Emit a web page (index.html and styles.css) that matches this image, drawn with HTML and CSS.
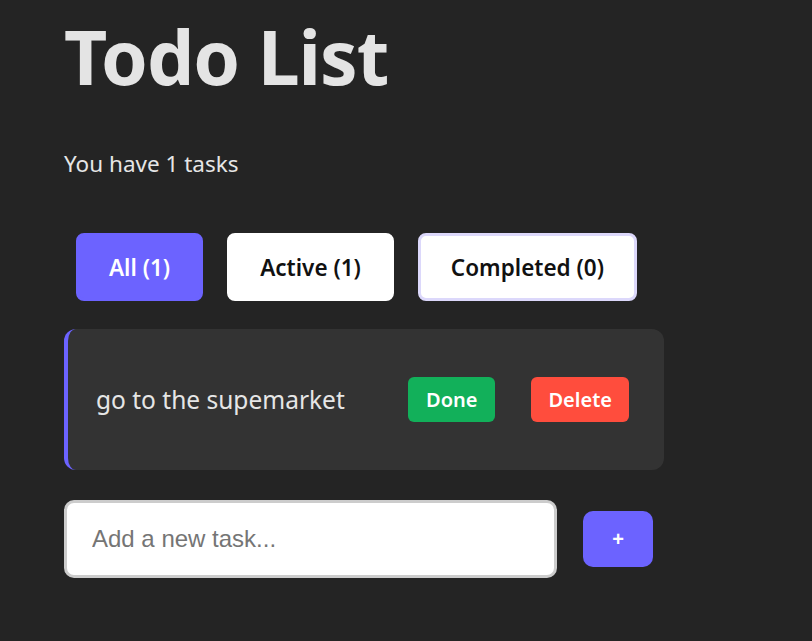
FILE: index.html
```html
<!DOCTYPE html>
<html>
<head>
<meta charset="utf-8">
<link rel="stylesheet" href="styles.css">
</head>
<body>
<main class="app">
  <h1 class="title">Todo List</h1>
  <p class="count">You have 1 tasks</p>
  <div class="filters">
    <button class="filter filter-active">All (1)</button>
    <button class="filter">Active (1)</button>
    <button class="filter filter-focus">Completed (0)</button>
  </div>
  <ul class="tasks">
    <li class="task">
      <span class="task-text">go to the supemarket</span>
      <div class="task-actions">
        <button class="btn btn-done">Done</button>
        <button class="btn btn-delete">Delete</button>
      </div>
    </li>
  </ul>
  <form class="add-form">
    <input class="add-input" type="text" placeholder="Add a new task...">
    <button class="add-btn" type="button">+</button>
  </form>
</main>
</body>
</html>
```
FILE: styles.css
```css
html, body {
  margin: 0;
  padding: 0;
  background: #242424;
}
body {
  font-family: "Noto Sans", "Open Sans", sans-serif;
  color: #e6e6e6;
}
.app {
  padding: 0 64px;
}
.title {
  margin: 0;
  padding-top: 19px;
  font-size: 75px;
  line-height: 75px;
  font-weight: 700;
  color: #e4e4e4;
  letter-spacing: -1px;
}
.count {
  margin: 56px 0 0;
  font-size: 22.5px;
  line-height: 28px;
  color: #e6e6e6;
}
.filters {
  display: flex;
  margin-top: 55px;
}
.filter {
  margin: 0 12px;
  height: 68px;
  padding: 0 30px;
  border: 3px solid #ffffff;
  border-radius: 8px;
  background: #ffffff;
  color: #111;
  font-family: inherit;
  font-size: 22.5px;
  font-weight: 600;
}
.filter-active {
  background: #6c63ff;
  border-color: #6c63ff;
  color: #fff;
}
.filter-focus {
  border-color: #dcd8fb;
}
.tasks {
  list-style: none;
  margin: 28px 0 0;
  padding: 0;
  width: 600px;
}
.task {
  display: flex;
  align-items: center;
  height: 141px;
  box-sizing: border-box;
  padding: 0 35px 0 28px;
  background: #333333;
  border-left: 4px solid #6c63ff;
  border-radius: 12px;
}
.task-text {
  flex: 1;
  font-size: 24.5px;
  color: #e6e6e6;
}
.task-actions {
  display: flex;
  gap: 36px;
}
.btn {
  height: 45px;
  border: none;
  border-radius: 6px;
  color: #fff;
  font-family: inherit;
  font-size: 20px;
  font-weight: 600;
  padding: 0 18px;
}
.btn-done {
  background: #12b05a;
}
.btn-delete {
  background: #ff4d3d;
  padding: 0 17px;
}
.add-form {
  display: flex;
  align-items: center;
  margin-top: 30px;
  gap: 26px;
}
.add-input {
  width: 493px;
  height: 78px;
  box-sizing: border-box;
  border: 3px solid #cccccc;
  border-radius: 10px;
  padding: 0 25px;
  font-family: Arial, "Liberation Sans", sans-serif;
  font-size: 24px;
  background: #fff;
  color: #222;
  outline: none;
}
.add-input::placeholder {
  color: #757575;
  font-family: Arial, "Liberation Sans", sans-serif;
}
.add-btn {
  width: 70px;
  height: 56px;
  border: none;
  border-radius: 10px;
  background: #6c63ff;
  color: #fff;
  font-family: Arial, "Liberation Sans", sans-serif;
  font-size: 20px;
  font-weight: 700;
}
```
